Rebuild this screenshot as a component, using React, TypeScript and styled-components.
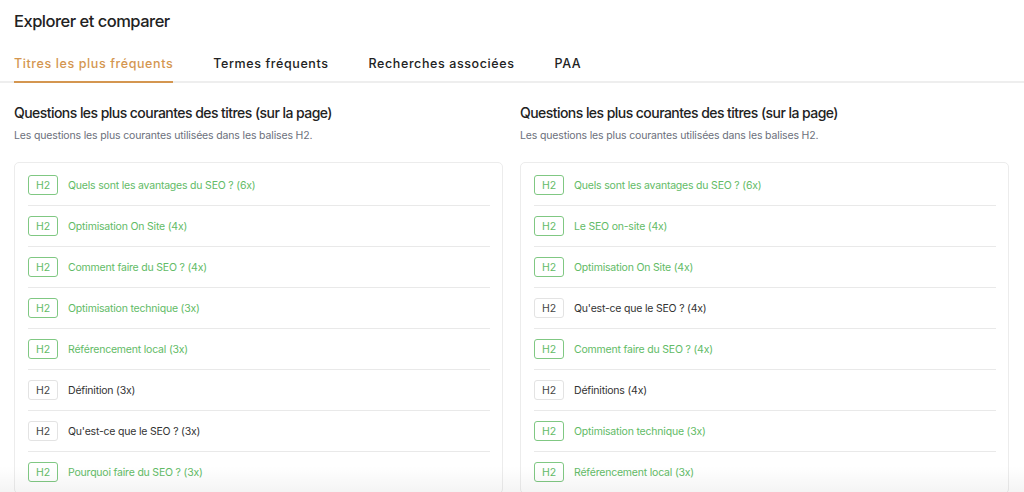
import React, { FunctionComponent } from "react";
import styled, { createGlobalStyle } from "styled-components";

const GlobalStyle = createGlobalStyle`
  html, body {
    margin: 0;
    padding: 0;
    background: #fff;
    overflow: hidden;
  }
  body {
    font-family: Inter, "Noto Sans", "Liberation Sans", sans-serif;
    color: #222;
  }
`;

const Page = styled.div`
  width: 1024px;
  height: 492px;
  overflow: hidden;
  position: relative;
  box-sizing: border-box;
`;

const Title = styled.h1`
  margin: 0;
  padding: 10px 14px 0;
  font-size: 16.5px;
  line-height: 22px;
  font-weight: 500;
  color: #222;
  letter-spacing: -0.5px;
`;

const TabBar = styled.nav`
  display: flex;
  gap: 40px;
  margin-top: 23px;
  padding: 0 14px;
  border-bottom: 2px solid #eeeeee;
`;

const Tab = styled.button<{ active?: boolean }>`
  border: 0;
  background: none;
  padding: 0 0 8px;
  margin-bottom: -2px;
  font-family: inherit;
  font-size: 12.5px;
  line-height: 18px;
  font-weight: 500;
  letter-spacing: 0.6px;
  color: ${(p) => (p.active ? "#d49650" : "#222")};
  border-bottom: 2px solid ${(p) => (p.active ? "#d49650" : "transparent")};
  cursor: pointer;
`;

const Columns = styled.div`
  display: grid;
  grid-template-columns: 1fr 1fr;
  gap: 17px;
  padding: 19px 15px 0 14px;
`;

const Section = styled.section`
  display: flex;
  flex-direction: column;
`;

const SectionTitle = styled.h2`
  margin: 0;
  font-size: 14px;
  line-height: 22px;
  font-weight: 500;
  color: #222;
  letter-spacing: -0.55px;
`;

const SectionText = styled.p`
  margin: 3px 0 0;
  font-size: 10.5px;
  line-height: 17px;
  color: #6b6f7b;
  letter-spacing: -0.15px;
`;

const Card = styled.div`
  margin-top: 18px;
  border: 1px solid #ececec;
  border-radius: 5px;
  padding: 2px 12px 0 13px;
  background: #fff;
`;

const Row = styled.div`
  display: flex;
  align-items: center;
  gap: 10px;
  height: 40px;
  border-bottom: 1px solid #e9e9e9;
`;

const Badge = styled.span<{ green?: boolean }>`
  display: inline-flex;
  align-items: center;
  justify-content: center;
  width: 30px;
  height: 20px;
  box-sizing: border-box;
  border-radius: 3px;
  border: 1px solid ${(p) => (p.green ? "#80c883" : "#e3e3e3")};
  font-size: 10.5px;
  font-weight: 400;
  color: ${(p) => (p.green ? "#62bb66" : "#444")};
`;

const RowText = styled.span<{ green?: boolean }>`
  font-size: 10.5px;
  letter-spacing: -0.2px;
  color: ${(p) => (p.green ? "#62bb66" : "#333")};
`;

const BottomFade = styled.div`
  position: absolute;
  left: 0;
  right: 0;
  bottom: 0;
  height: 26px;
  background: linear-gradient(to bottom, rgba(0, 0, 0, 0), rgba(0, 0, 0, 0.045));
  pointer-events: none;
`;

type Item = { label: string; green: boolean };

const left: Item[] = [
  { label: "Quels sont les avantages du SEO ? (6x)", green: true },
  { label: "Optimisation On Site (4x)", green: true },
  { label: "Comment faire du SEO ? (4x)", green: true },
  { label: "Optimisation technique (3x)", green: true },
  { label: "Référencement local (3x)", green: true },
  { label: "Définition (3x)", green: false },
  { label: "Qu'est-ce que le SEO ? (3x)", green: false },
  { label: "Pourquoi faire du SEO ? (3x)", green: true },
];

const right: Item[] = [
  { label: "Quels sont les avantages du SEO ? (6x)", green: true },
  { label: "Le SEO on-site (4x)", green: true },
  { label: "Optimisation On Site (4x)", green: true },
  { label: "Qu'est-ce que le SEO ? (4x)", green: false },
  { label: "Comment faire du SEO ? (4x)", green: true },
  { label: "Définitions (4x)", green: false },
  { label: "Optimisation technique (3x)", green: true },
  { label: "Référencement local (3x)", green: true },
];

const tabs = ["Titres les plus fréquents", "Termes fréquents", "Recherches associées", "PAA"];

const HeadingList: FunctionComponent<{ items: Item[] }> = ({ items }) => (
  <Section>
    <SectionTitle>Questions les plus courantes des titres (sur la page)</SectionTitle>
    <SectionText>Les questions les plus courantes utilisées dans les balises H2.</SectionText>
    <Card>
      {items.map((item, i) => (
        <Row key={i}>
          <Badge green={item.green}>H2</Badge>
          <RowText green={item.green}>{item.label}</RowText>
        </Row>
      ))}
    </Card>
  </Section>
);

const App: FunctionComponent = () => {
  return (
    <Page>
      <GlobalStyle />
      <Title>Explorer et comparer</Title>
      <TabBar>
        {tabs.map((t, i) => (
          <Tab key={t} active={i === 0}>
            {t}
          </Tab>
        ))}
      </TabBar>
      <Columns>
        <HeadingList items={left} />
        <HeadingList items={right} />
      </Columns>
      <BottomFade />
    </Page>
  );
};

export default App;
